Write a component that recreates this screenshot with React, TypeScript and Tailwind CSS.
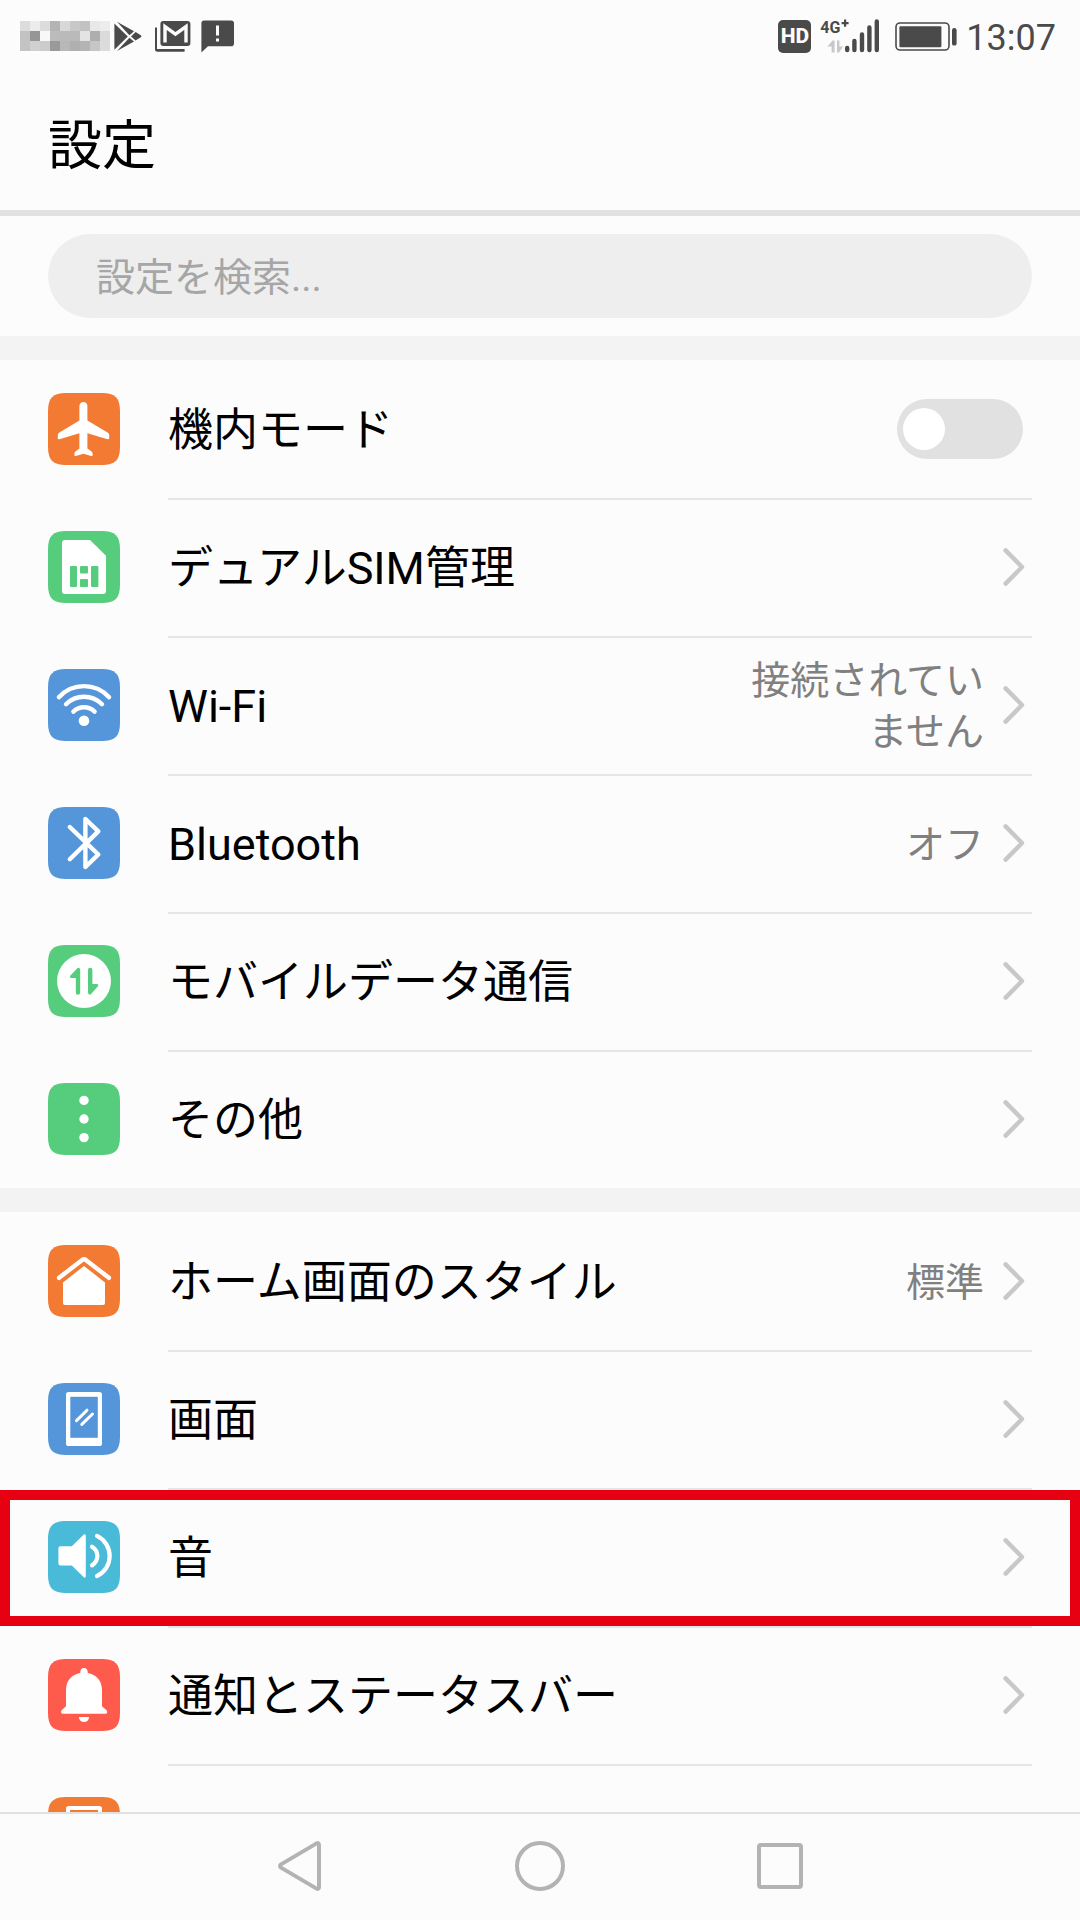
import React from "react";

type IconName =
  | "airplane" | "sim" | "wifi" | "bluetooth" | "data" | "more"
  | "home" | "screen" | "sound" | "bell" | "lock";

const TILE = "M0 18C0 5 5 0 18 0H54C67 0 72 5 72 18V54C72 67 67 72 54 72H18C5 72 0 67 0 54Z";

const ORANGE = "#f37a33";
const GREEN = "#56cd7d";
const BLUE = "#5596db";
const CYAN = "#49bbd9";
const RED = "#ff5b4d";

const tileColors: Record<IconName, string> = {
  airplane: ORANGE,
  sim: GREEN,
  wifi: BLUE,
  bluetooth: BLUE,
  data: GREEN,
  more: GREEN,
  home: ORANGE,
  screen: BLUE,
  sound: CYAN,
  bell: RED,
  lock: ORANGE,
};

const glyphs: Record<IconName, React.ReactNode> = {
  airplane: (
    <path
      fill="#fff"
      d="M35.5 9C33 9 31.4 10.8 31.4 13V27.6L11 39.8Q9.8 40.6 9.8 42V45.2Q9.8 46.6 11.4 46.2L31.4 40.2V55.4L27.4 58.6Q26.4 59.4 26.4 60.6V62.2Q26.4 63.4 27.8 63L35.5 60.8L43.2 63Q44.6 63.4 44.6 62.2V60.6Q44.6 59.4 43.6 58.6L39.4 55.4V40.2L59.6 46.2Q61.2 46.6 61.2 45.2V42Q61.2 40.6 60 39.8L39.4 27.6V13C39.4 10.8 38 9 35.5 9Z"
    />
  ),
  sim: (
    <>
      <path fill="#fff" d="M17 9H42L58 24.7V60Q58 63 55 63H17Q14 63 14 60V12Q14 9 17 9Z" />
      <g fill={GREEN}>
        <rect x="22" y="35" width="7" height="21" rx="1" />
        <rect x="32" y="35" width="8" height="7.4" rx="1" />
        <rect x="32" y="48" width="8" height="8" rx="1" />
        <rect x="43" y="35" width="7.4" height="21" rx="1" />
      </g>
    </>
  ),
  wifi: (
    <>
      <g fill="none" stroke="#fff" strokeWidth="4.4" strokeLinecap="round">
        <path d="M10.9 28.2A34 34 0 0 1 61.1 28.2" />
        <path d="M18 35.2A25.4 25.4 0 0 1 54 35.2" />
        <path d="M25.4 42.6A15.2 15.2 0 0 1 46.6 42.6" />
      </g>
      <circle cx="36" cy="51.7" r="5.3" fill="#fff" />
    </>
  ),
  bluetooth: (
    <path
      d="M21.8 20L50.3 47.5L37.4 60V12L50.3 24.4L21.8 52.2"
      fill="none"
      stroke="#fff"
      strokeWidth="4.4"
      strokeLinecap="round"
      strokeLinejoin="round"
    />
  ),
  data: (
    <>
      <circle cx="36" cy="36" r="27" fill="#fff" />
      <g fill={GREEN}>
        <path d="M29.8 22.8Q32.2 22.6 32.2 25V47.6Q32.2 49.8 30 49.8Q27.8 49.8 27.8 47.6V33H23.4Q21.4 33 22 31Z" />
        <path d="M42.4 49.8Q40 49.8 40 47.6V25Q40 22.7 42.2 22.7Q44.4 22.7 44.4 25V39H48.8Q50.8 39.2 50.2 41Z" />
      </g>
    </>
  ),
  more: (
    <g fill="#fff">
      <circle cx="36" cy="17.4" r="4.7" />
      <circle cx="36" cy="36" r="4.7" />
      <circle cx="36" cy="54.6" r="4.7" />
    </g>
  ),
  home: (
    <>
      <path
        d="M11.1 32.8L34.2 14.9Q36 13.6 37.8 14.9L60.9 32.8"
        fill="none"
        stroke="#fff"
        strokeWidth="4.4"
        strokeLinecap="round"
      />
      <path fill="#fff" d="M36 21L57 37.4V58Q57 60 55 60H17Q15 60 15 58V37.4Z" />
    </>
  ),
  screen: (
    <>
      <rect x="18" y="9" width="36" height="54" rx="2.6" fill="#fff" />
      <rect x="22.3" y="13.8" width="27.5" height="41" fill={BLUE} />
      <path
        d="M28.5 37.6L39 27.2M33.8 41.4L44.5 31"
        fill="none"
        stroke="#fff"
        strokeWidth="3"
        strokeLinecap="round"
      />
    </>
  ),
  sound: (
    <>
      <path
        fill="#fff"
        d="M12.4 25.2H23.8L35.8 13.6Q37.8 12.4 37.8 15V55Q37.8 57.6 35.8 56.2L23.8 44.4H12.4Q10.4 44.4 10.4 42.4V27.2Q10.4 25.2 12.4 25.2Z"
      />
      <g fill="none" stroke="#fff" strokeWidth="4.2" strokeLinecap="round">
        <path d="M44 25.8A10.8 10.8 0 0 1 44 44.4" />
        <path d="M49 14.9A22.2 22.2 0 0 1 49 55" />
      </g>
    </>
  ),
  bell: (
    <g fill="#fff">
      <path d="M36 9C33.6 9 32.2 10.8 32.2 14C24 15.4 18 21.6 18 31V47.2L13.4 51.6Q12.2 54.8 15 54.8H57.2Q60 54.8 58.8 51.6L54 47.2V31C54 21.6 48 15.4 39.8 14C39.8 10.8 38.4 9 36 9Z" />
      <path d="M31.4 58H40.6Q41.2 58 41 59Q40 63 36 63T31 59Q30.8 58 31.4 58Z" />
    </g>
  ),
  lock: (
    <>
      <rect x="18" y="9" width="36" height="54" rx="2.6" fill="#fff" />
      <rect x="22" y="13" width="28" height="42" fill={ORANGE} />
    </>
  ),
};

function TileIcon({ name }: { name: IconName }) {
  return (
    <svg viewBox="0 0 72 72" className="size-[72px] shrink-0" aria-hidden="true">
      <path d={TILE} fill={tileColors[name]} />
      {glyphs[name]}
    </svg>
  );
}

function Chevron() {
  return (
    <svg viewBox="0 0 24 42" className="h-[42px] w-6 shrink-0" aria-hidden="true">
      <path
        d="M3.6 4.4L20 21L3.6 37.6"
        fill="none"
        stroke="#c8c8c8"
        strokeWidth="4.4"
        strokeLinecap="round"
        strokeLinejoin="round"
      />
    </svg>
  );
}

type Item = { icon: IconName; label: string; value?: string; highlighted?: boolean };

const ROW = "flex h-[138px] w-full items-center gap-12 px-12 text-left";
const BODY =
  "flex h-full min-w-0 flex-1 items-center justify-between text-[45px] leading-none text-black";
const DIVIDER = "group-not-first:shadow-[inset_0_2px_0_#e6e6e6]";

function Row({ item }: { item: Item }) {
  return (
    <li className="group relative">
      <button type="button" className={ROW}>
        <TileIcon name={item.icon} />
        <span className={`${BODY} ${DIVIDER}`}>
          <span className="pt-[3px]">{item.label}</span>
          <span className="flex items-center gap-[18px] pr-[6px]">
            {item.value && (
              <span className="max-w-60 pt-1 text-right text-[39px] leading-[51px] text-[#808080]">
                {item.value}
              </span>
            )}
            <Chevron />
          </span>
        </span>
      </button>
      {item.highlighted && (
        <span className="pointer-events-none absolute inset-x-0 top-[2px] bottom-0 border-10 border-[#e60012]" />
      )}
    </li>
  );
}

function AirplaneRow() {
  return (
    <li className="group">
      <label className={ROW}>
        <TileIcon name="airplane" />
        <span className={BODY}>
          <span className="pt-[3px]">機内モード</span>
          <input
            type="checkbox"
            role="switch"
            className="mr-[9px] flex h-[60px] w-[126px] appearance-none items-center rounded-full bg-[#e1e1e1] px-[6px] before:size-[42px] before:rounded-full before:bg-white checked:justify-end checked:bg-[#5596db]"
          />
        </span>
      </label>
    </li>
  );
}

const network: Item[] = [
  { icon: "sim", label: "デュアルSIM管理" },
  { icon: "wifi", label: "Wi-Fi", value: "接続されていません" },
  { icon: "bluetooth", label: "Bluetooth", value: "オフ" },
  { icon: "data", label: "モバイルデータ通信" },
  { icon: "more", label: "その他" },
];

const device: Item[] = [
  { icon: "home", label: "ホーム画面のスタイル", value: "標準" },
  { icon: "screen", label: "画面" },
  { icon: "sound", label: "音", highlighted: true },
  { icon: "bell", label: "通知とステータスバー" },
];

const mosaic = [
  ["#dcdcdc", "#ececec", "#dcdcdc", "#b4b4b4", "#d8d8d8", "#c8c8c8", "#c2c2c2", "#e8e8e8", "#ececec"],
  ["#c2c2c2", "#969696", "#f8f8f8", "#bcbcbc", "#bababa", "#bababa", "#e4e4e4", "#aeaeae", "#dadada"],
  ["#c4c4c4", "#d0d0d0", "#cccccc", "#9a9a9a", "#b8b8b8", "#b0b0b0", "#b4b4b4", "#c6c6c6", "#dcdcdc"],
];

function StatusBar() {
  return (
    <div className="flex h-[72px] shrink-0 items-center justify-between pr-6 pl-5 text-[#4a4a4a]">
      <div className="flex items-center">
        <svg viewBox="0 0 90 30" className="h-[30px] w-[90px]" shapeRendering="crispEdges" aria-hidden="true">
          {mosaic.map((row, y) =>
            row.map((fill, x) => (
              <rect key={`${x}-${y}`} x={x * 10} y={y * 10} width="10" height="10" fill={fill} />
            )),
          )}
        </svg>
        <svg viewBox="0 0 124 36" className="ml-1 h-9 w-[124px]" aria-hidden="true">
          <g fill="currentColor">
            <path d="M.4 5.6L13.8 18.4L.4 31.8Z" />
            <path d="M3 3.8L20 13.2L15.4 17.2Z" />
            <path d="M21.6 14L26.4 17Q28.4 18.2 26.4 19.6L21.6 22.4L17 18.4Z" />
            <path d="M3 33L15.4 19.8L20 23.4Z" />
            <path d="M41 9.4H43V31H70.6V33.4Q70.6 33.8 70 33.8H43.4Q41 33.8 41 31.4Z" />
            <rect x="46.4" y="3" width="30" height="25" rx="3" />
            <path d="M90 2.4H117Q120 2.4 120 5.4V25.4Q120 28.2 117 28.2H94L87.4 34.4V5.4Q87.4 2.4 90 2.4Z" />
          </g>
          <path d="M51 24.4V8.6L61.4 16.2L72 8.6V24.4" fill="none" stroke="#fcfcfc" strokeWidth="3.4" />
          <path d="M102 7.4H105V17.6H102ZM102 20.4H105V23.4H102Z" fill="#fcfcfc" />
        </svg>
      </div>
      <div className="flex items-center">
        <span className="flex size-[33px] items-center justify-center rounded-[5px] bg-[#4a4a4a] text-[21px] leading-none font-extrabold text-[#fcfcfc]">
          HD
        </span>
        <div className="ml-[9px] grid h-9 w-[61px] items-start">
          <span className="col-start-1 row-start-1 text-[16px] leading-5 font-bold">4G</span>
          <svg viewBox="0 0 61 36" className="col-start-1 row-start-1 h-9 w-[61px]" aria-hidden="true">
            <path d="M21.6 5.2H28.6M25.1 1.6V8.8" stroke="currentColor" strokeWidth="2.2" />
            <path d="M12.6 22.4H14.6V34.4H11.6V28.6H7.4ZM17 22.4H19.4V28.4H23L19 34.4H17Z" fill="#c8c8c8" />
            <path
              d="M27.2 30V32M34.4 23V32M42 16.4V32M49.4 9.4V32M56.8 3.4V32"
              stroke="currentColor"
              strokeWidth="4.4"
              strokeLinecap="round"
            />
          </svg>
        </div>
        <svg viewBox="0 0 63 30" className="ml-[14px] h-[30px] w-[63px]" aria-hidden="true">
          <rect x="1" y="2" width="53" height="27" rx="4" fill="none" stroke="currentColor" strokeWidth="1.6" />
          <rect x="4.4" y="5.2" width="42" height="21" rx="1" fill="currentColor" />
          <rect x="57" y="7" width="4.6" height="17.6" rx="2.2" fill="currentColor" />
        </svg>
        <span className="ml-2 pt-[3px] text-[36px] leading-none">13:07</span>
      </div>
    </div>
  );
}

const NAV_BUTTON = "flex h-full w-[240px] items-center justify-center";

function NavBar() {
  return (
    <nav className="flex h-[108px] shrink-0 items-center justify-center border-t-2 border-[#e1e1e1] pb-[2px]">
      <button type="button" aria-label="戻る" className={NAV_BUTTON}>
        <svg viewBox="0 0 48 56" className="h-14 w-12" fill="none" stroke="#b3b3b3" strokeWidth="4">
          <path d="M40.6 5.4Q43 4.4 43 7V49Q43 51.6 40.6 50.6L5 29.6Q3 28 5 26.4Z" strokeLinejoin="round" />
        </svg>
      </button>
      <button type="button" aria-label="ホーム" className={NAV_BUTTON}>
        <svg viewBox="0 0 56 56" className="size-14" fill="none" stroke="#b3b3b3" strokeWidth="4">
          <circle cx="28" cy="28" r="23" />
        </svg>
      </button>
      <button type="button" aria-label="最近使ったアプリ" className={NAV_BUTTON}>
        <svg viewBox="0 0 56 56" className="size-14" fill="none" stroke="#b3b3b3" strokeWidth="4">
          <rect x="7" y="7" width="42" height="42" rx="2" />
        </svg>
      </button>
    </nav>
  );
}

export default function App() {
  return (
    <div
      lang="ja"
      className="flex h-screen flex-col overflow-hidden bg-[#fcfcfc] font-['Roboto','Noto_Sans_CJK_JP',sans-serif]"
    >
      <StatusBar />
      <header className="flex h-36 shrink-0 items-center border-b-6 border-[#e1e1e1] px-12 pt-3">
        <h1 className="text-[54px] leading-none text-black">設定</h1>
      </header>
      <main className="min-h-0 flex-1 overflow-hidden">
        <div className="px-12 py-[18px]">
          <input
            type="search"
            aria-label="設定を検索"
            placeholder="設定を検索..."
            className="block h-[84px] w-full rounded-full bg-[#eeeeee] px-12 pt-1 text-[39px] text-black outline-none placeholder:text-[#a6a6a6]"
          />
        </div>
        <ul className="border-t-24 border-[#f3f3f3]">
          <AirplaneRow />
          {network.map((item) => (
            <Row key={item.label} item={item} />
          ))}
        </ul>
        <ul className="border-t-24 border-[#f3f3f3]">
          {device.map((item) => (
            <Row key={item.label} item={item} />
          ))}
          <li className="group">
            <div className={ROW}>
              <TileIcon name="lock" />
              <span className={`${BODY} ${DIVIDER}`} />
            </div>
          </li>
        </ul>
      </main>
      <NavBar />
    </div>
  );
}
